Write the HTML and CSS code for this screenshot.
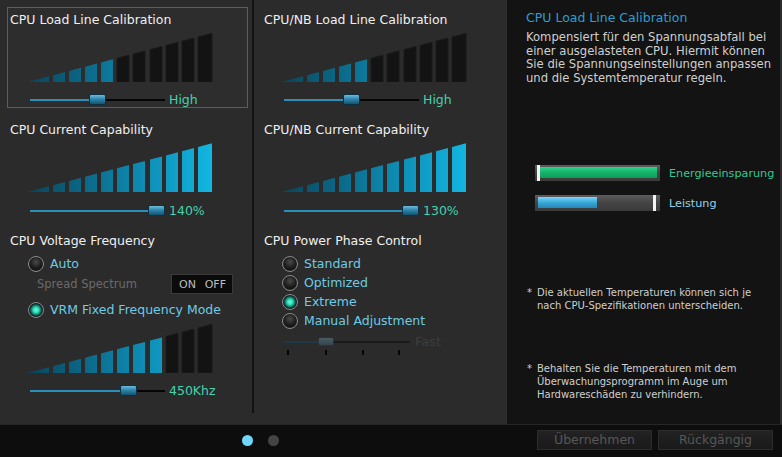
FILE: index.html
```html
<!DOCTYPE html>
<html>
<head>
<meta charset="utf-8">
<title>CPU Power</title>
<link rel="stylesheet" href="styles.css">
</head>
<body>
<svg class="defs" width="0" height="0">
  <defs>
    <linearGradient id="gBlue" gradientUnits="userSpaceOnUse" x1="0" y1="0" x2="190" y2="0">
      <stop offset="0" stop-color="#0a4257"/>
      <stop offset="0.5" stop-color="#0d7ea3"/>
      <stop offset="1" stop-color="#12b8e4"/>
    </linearGradient>
  </defs>
</svg>
<div class="app">
  <div class="main">
    <div class="settings">
      <div class="col">
        <section class="group active">
          <h2 class="gtitle">CPU Load Line Calibration</h2>
          <svg class="bars" width="190" height="50" viewBox="0 0 190 50">
            <polygon class="on" points="2,50 24,50 24,44.2"/>
            <polygon class="on" points="28,50 40,50 40,40 28,43.2"/>
            <polygon class="on" points="44,50 56,50 56,35.8 44,38.9"/>
            <polygon class="on" points="60,50 72,50 72,31.6 60,34.7"/>
            <polygon class="on" points="76,50 88,50 88,27.3 76,30.5"/>
            <polygon class="off" points="92,50 104,50 104,23.1 92,26.3"/>
            <polygon class="off" points="108,50 120,50 120,18.9 108,22.1"/>
            <polygon class="off" points="125,50 137,50 137,14.4 125,17.6"/>
            <polygon class="off" points="141,50 153,50 153,10.2 141,13.4"/>
            <polygon class="off" points="157,50 169,50 169,6 157,9.2"/>
            <polygon class="off" points="173,50 187,50 187,1.3 173,5"/>
          </svg>
          <div class="slider-row">
            <div class="slider"><div class="fill" style="width:66px"></div><div class="thumb" style="left:59px"></div></div>
            <span class="val">High</span>
          </div>
        </section>
        <section class="group g2">
          <h2 class="gtitle">CPU Current Capability</h2>
          <svg class="bars" width="190" height="50" viewBox="0 0 190 50">
            <polygon class="on" points="2,50 24,50 24,44.2"/>
            <polygon class="on" points="28,50 40,50 40,40 28,43.2"/>
            <polygon class="on" points="44,50 56,50 56,35.8 44,38.9"/>
            <polygon class="on" points="60,50 72,50 72,31.6 60,34.7"/>
            <polygon class="on" points="76,50 88,50 88,27.3 76,30.5"/>
            <polygon class="on" points="92,50 104,50 104,23.1 92,26.3"/>
            <polygon class="on" points="108,50 120,50 120,18.9 108,22.1"/>
            <polygon class="on" points="125,50 137,50 137,14.4 125,17.6"/>
            <polygon class="on" points="141,50 153,50 153,10.2 141,13.4"/>
            <polygon class="on" points="157,50 169,50 169,6 157,9.2"/>
            <polygon class="on" points="173,50 187,50 187,1.3 173,5"/>
          </svg>
          <div class="slider-row">
            <div class="slider"><div class="fill" style="width:125px"></div><div class="thumb" style="left:118px"></div></div>
            <span class="val">140%</span>
          </div>
        </section>
        <section class="group g3">
          <h2 class="gtitle">CPU Voltage Frequency</h2>
          <div class="radio-row first">
            <span class="radio"></span><span class="rlabel">Auto</span>
          </div>
          <div class="spread-row">
            <span class="spread-label">Spread Spectrum</span>
            <div class="toggle"><span>ON</span><span>OFF</span></div>
          </div>
          <div class="radio-row vrm">
            <span class="radio checked"></span><span class="rlabel">VRM Fixed Frequency Mode</span>
          </div>
          <svg class="bars bars-vrm" width="190" height="50" viewBox="0 0 190 50">
            <polygon class="on" points="2,50 24,50 24,44.2"/>
            <polygon class="on" points="28,50 40,50 40,40 28,43.2"/>
            <polygon class="on" points="44,50 56,50 56,35.8 44,38.9"/>
            <polygon class="on" points="60,50 72,50 72,31.6 60,34.7"/>
            <polygon class="on" points="76,50 88,50 88,27.3 76,30.5"/>
            <polygon class="on" points="92,50 104,50 104,23.1 92,26.3"/>
            <polygon class="on" points="108,50 120,50 120,18.9 108,22.1"/>
            <polygon class="on" points="125,50 137,50 137,14.4 125,17.6"/>
            <polygon class="off" points="141,50 153,50 153,10.2 141,13.4"/>
            <polygon class="off" points="157,50 169,50 169,6 157,9.2"/>
            <polygon class="off" points="173,50 187,50 187,1.3 173,5"/>
          </svg>
          <div class="slider-row">
            <div class="slider"><div class="fill" style="width:96px"></div><div class="thumb" style="left:90px"></div></div>
            <span class="val">450Khz</span>
          </div>
        </section>
      </div>
      <div class="divider"></div>
      <div class="col">
        <section class="group">
          <h2 class="gtitle">CPU/NB Load Line Calibration</h2>
          <svg class="bars" width="190" height="50" viewBox="0 0 190 50">
            <polygon class="on" points="2,50 24,50 24,44.2"/>
            <polygon class="on" points="28,50 40,50 40,40 28,43.2"/>
            <polygon class="on" points="44,50 56,50 56,35.8 44,38.9"/>
            <polygon class="on" points="60,50 72,50 72,31.6 60,34.7"/>
            <polygon class="on" points="76,50 88,50 88,27.3 76,30.5"/>
            <polygon class="off" points="92,50 104,50 104,23.1 92,26.3"/>
            <polygon class="off" points="108,50 120,50 120,18.9 108,22.1"/>
            <polygon class="off" points="125,50 137,50 137,14.4 125,17.6"/>
            <polygon class="off" points="141,50 153,50 153,10.2 141,13.4"/>
            <polygon class="off" points="157,50 169,50 169,6 157,9.2"/>
            <polygon class="off" points="173,50 187,50 187,1.3 173,5"/>
          </svg>
          <div class="slider-row">
            <div class="slider"><div class="fill" style="width:66px"></div><div class="thumb" style="left:59px"></div></div>
            <span class="val">High</span>
          </div>
        </section>
        <section class="group g2">
          <h2 class="gtitle">CPU/NB Current Capability</h2>
          <svg class="bars" width="190" height="50" viewBox="0 0 190 50">
            <polygon class="on" points="2,50 24,50 24,44.2"/>
            <polygon class="on" points="28,50 40,50 40,40 28,43.2"/>
            <polygon class="on" points="44,50 56,50 56,35.8 44,38.9"/>
            <polygon class="on" points="60,50 72,50 72,31.6 60,34.7"/>
            <polygon class="on" points="76,50 88,50 88,27.3 76,30.5"/>
            <polygon class="on" points="92,50 104,50 104,23.1 92,26.3"/>
            <polygon class="on" points="108,50 120,50 120,18.9 108,22.1"/>
            <polygon class="on" points="125,50 137,50 137,14.4 125,17.6"/>
            <polygon class="on" points="141,50 153,50 153,10.2 141,13.4"/>
            <polygon class="on" points="157,50 169,50 169,6 157,9.2"/>
            <polygon class="on" points="173,50 187,50 187,1.3 173,5"/>
          </svg>
          <div class="slider-row">
            <div class="slider"><div class="fill" style="width:125px"></div><div class="thumb" style="left:118px"></div></div>
            <span class="val">130%</span>
          </div>
        </section>
        <section class="group g3">
          <h2 class="gtitle">CPU Power Phase Control</h2>
          <div class="phase-list">
            <div class="radio-row phase"><span class="radio"></span><span class="rlabel">Standard</span></div>
            <div class="radio-row phase"><span class="radio"></span><span class="rlabel">Optimized</span></div>
            <div class="radio-row phase"><span class="radio checked"></span><span class="rlabel">Extreme</span></div>
            <div class="radio-row phase"><span class="radio"></span><span class="rlabel">Manual Adjustment</span></div>
          </div>
          <div class="slider-row disabled">
            <div class="slider short">
              <div class="fill" style="width:40px"></div>
              <div class="thumb" style="left:35px"></div>
              <span class="tick" style="left:4px"></span>
              <span class="tick" style="left:42px"></span>
              <span class="tick" style="left:79px"></span>
              <span class="tick" style="left:115px"></span>
            </div>
            <span class="val">Fast</span>
          </div>
        </section>
      </div>
    </div>
    <aside class="info">
      <h3 class="info-title">CPU Load Line Calibration</h3>
      <p class="info-desc">Kompensiert für den Spannungsabfall bei<br>einer ausgelasteten CPU. Hiermit können<br>Sie die Spannungseinstellungen anpassen<br>und die Systemtemperatur regeln.</p>
      <div class="meters">
        <div class="meter">
          <div class="meter-track"><div class="mfill green" style="width:117px"></div><div class="marker" style="left:2px"></div></div>
          <span class="mlabel green-t">Energieeinsparung</span>
        </div>
        <div class="meter">
          <div class="meter-track"><div class="mfill blue" style="width:59px"></div><div class="marker" style="left:118px"></div></div>
          <span class="mlabel blue-t">Leistung</span>
        </div>
      </div>
      <div class="note note1"><span class="ast">*</span><span>Die aktuellen Temperaturen können sich je<br>nach CPU-Spezifikationen unterscheiden.</span></div>
      <div class="note note2"><span class="ast">*</span><span>Behalten Sie die Temperaturen mit dem<br>Überwachungsprogramm im Auge um<br>Hardwareschäden zu verhindern.</span></div>
    </aside>
  </div>
  <footer class="footer">
    <div class="pager"><span class="dot active"></span><span class="dot"></span></div>
    <div class="buttons">
      <button class="btn">Übernehmen</button>
      <button class="btn">Rückgängig</button>
    </div>
  </footer>
</div>
</body>
</html>
```
FILE: styles.css
```css
* { box-sizing: border-box; margin: 0; padding: 0; }
html, body { width: 782px; height: 457px; overflow: hidden; background: #0e0e0e; }
body { font-family: "DejaVu Sans", "Liberation Sans", sans-serif; color: #e6e6e6; }

.defs { display: block; width: 0; height: 0; overflow: hidden; }

.app { width: 782px; height: 457px; display: flex; flex-direction: column; }
.main { height: 424px; display: flex; }

.settings { width: 506px; height: 424px; display: flex; background: #2b2b2b; }
.col { width: 252px; padding-top: 7px; }
.divider { width: 2px; background: #121212; margin-bottom: 11px; }

.group {
  margin-left: 7px; width: 241px; height: 101px;
  border: 1px solid transparent;
  padding: 4px 0 0 2px;
}
.group.active { border-color: #3b6a72; background: #2d2d2d; }
.group.g2 { margin-top: 9px; }
.group.g3 { margin-top: 10px; height: auto; border: 0; padding: 5px 0 0 3px; }

.gtitle { font-size: 12.5px; font-weight: normal; line-height: 16px; color: #f0f0f0; white-space: nowrap; }

.bars { display: block; margin: 4px 0 0 15px; }
.bars .on { fill: url(#gBlue); }
.bars .off { fill: #131313; stroke: #1b1b1b; stroke-width: 1; }
.bars-vrm { margin-top: 4px; }

.slider-row { display: flex; align-items: center; height: 16px; margin-top: 10px; margin-left: 20px; }
.group.g2 .slider-row { margin-top: 11px; }
.slider { position: relative; width: 135px; height: 2px; background: #050505; }
.slider .fill { height: 2px; background: #2b8fbb; }
.thumb {
  position: absolute; top: -5px; width: 17px; height: 11px; border-radius: 2px;
  background: linear-gradient(#6cbcdc, #2f86ad 45%, #17536f);
  border: 1px solid #0c3142;
}
.val { margin-left: 4px; font-size: 12.5px; color: #42d4ae; line-height: 16px; }

.radio-row { display: flex; align-items: center; height: 18px; margin-left: 18px; }
.radio-row.first { margin-top: 6px; }
.radio-row.vrm { margin-top: 7px; }
.radio {
  width: 16px; height: 16px; border-radius: 50%; flex: none;
  border: 1px solid #8a8a8a;
  background: radial-gradient(circle at 50% 35%, #4a4a4a 0, #1a1a1a 55%, #050505 100%);
  box-shadow: inset 0 0 0 1px #222;
}
.radio.checked {
  background: radial-gradient(circle at 50% 50%, #7affe0 0, #27d5b0 3px, #0d6c60 5px, #0a1e1c 7px, #050505 100%);
}
.rlabel { margin-left: 6px; font-size: 12.5px; color: #6ccbe6; line-height: 16px; white-space: nowrap; }

.spread-row { display: flex; align-items: center; height: 20px; margin-top: 1px; padding-left: 27px; }
.spread-label { width: 134px; font-size: 11.5px; color: #6a6a6a; white-space: nowrap; }
.toggle {
  width: 62px; height: 20px; background: #0b0b0b; border: 1px solid #3a3a3a;
  display: flex; align-items: center; justify-content: space-between; padding: 0 6px 0 7px;
  font-size: 11px; color: #bdbdbd;
}

.phase-list { margin-top: 5px; }
.radio-row.phase { height: 19px; margin-left: 18px; }

.slider-row.disabled { margin-top: 4px; margin-left: 19px; }
.slider.short { width: 127px; background: #1a1a1a; }
.slider.short .fill { background: #1f3846; }
.slider.short .thumb { background: linear-gradient(#4a5a62, #36464e); border-color: #2a3338; height: 9px; top: -4px; width: 16px; }
.tick { position: absolute; top: 9px; width: 2px; height: 5px; background: #050505; }
.slider-row.disabled .val { color: #3d3d3d; margin-left: 5px; font-size: 13px; }

.info {
  width: 276px; height: 424px; background: #131313;
  border-left: 1px solid #2f2f2f; border-right: 2px solid #2c2c2c;
  padding: 10px 0 0 19px;
}
.info-title { font-size: 12.5px; font-weight: normal; line-height: 16px; color: #2b9fd0; white-space: nowrap; }
.info-desc { margin-top: 5px; font-size: 11.6px; line-height: 13.6px; color: #cfcfcf; white-space: nowrap; }

.meters { margin-top: 80px; margin-left: 9px; }
.meter { display: flex; align-items: center; height: 16px; }
.meter + .meter { margin-top: 14px; }
.meter-track {
  position: relative; width: 125px; height: 16px;
  background: linear-gradient(#5c5c5c, #444 50%, #3a3a3a);
  padding: 2px 3px;
}
.mfill { height: 11px; }
.mfill.green { background: linear-gradient(#2fd58a, #16b46a 50%, #0e9a58); margin-left: 2px; }
.mfill.blue { background: linear-gradient(#7bd6f6, #3aa8da 50%, #2386b8); }
.marker { position: absolute; top: 0; width: 3px; height: 16px; background: #f4f4f4; }
.mlabel { margin-left: 9px; font-size: 11.2px; white-space: nowrap; }
.green-t { color: #33c893; }
.blue-t { color: #8fd3f0; }

.note { display: flex; font-size: 10px; line-height: 13px; color: #cfcfcf; white-space: nowrap; }
.note1 { margin-top: 75px; }
.note2 { margin-top: 50px; }
.ast { width: 10px; flex: none; margin-left: 1px; }

.footer {
  height: 33px; border-top: 1px solid #262626; background: #0d0d0d;
  display: flex; align-items: center; padding: 0 9px 0 242px;
}
.pager { display: flex; align-items: center; gap: 15px; margin-top: -2px; }
.dot { width: 11px; height: 11px; border-radius: 50%; background: #444; }
.dot.active { background: #72d6fa; }
.buttons { margin-left: auto; display: flex; gap: 6px; margin-top: -3px; }
.btn {
  width: 115px; height: 20px; font-family: inherit; font-size: 12.5px; color: #575757;
  background: linear-gradient(#222, #1a1a1a); border: 1px solid #2c2c2c;
}
```
